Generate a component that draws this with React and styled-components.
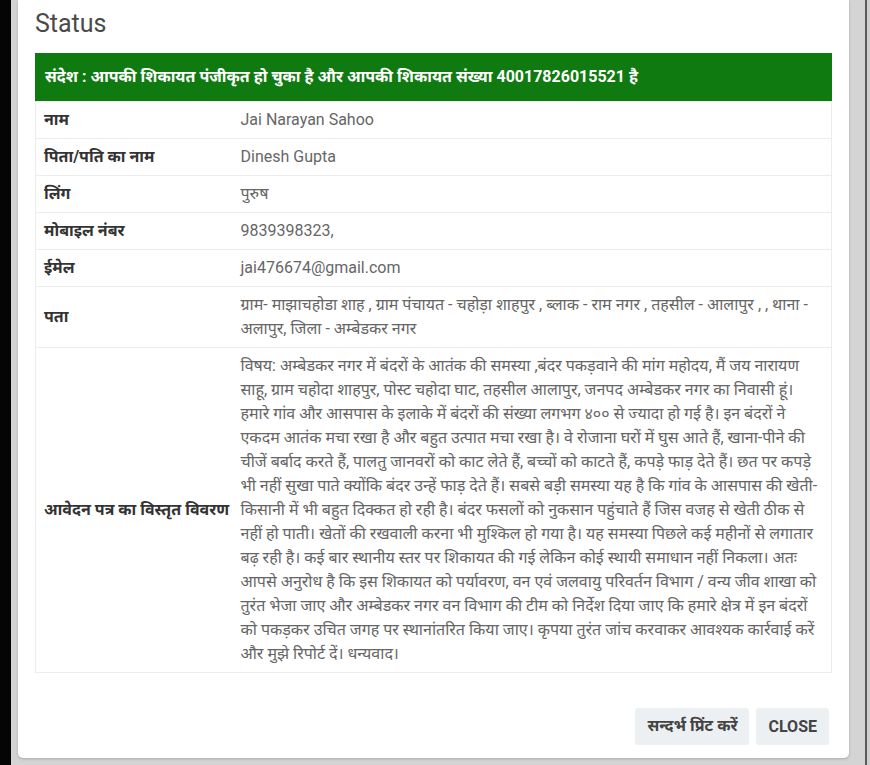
import React from "react";
import styled, { createGlobalStyle } from "styled-components";

const FONT = `Roboto, "Noto Sans Devanagari", "Noto Sans", "Lohit Devanagari", sans-serif`;

const rows = [
  { label: "नाम", value: ["Jai Narayan Sahoo"] },
  { label: "पिता/पति का नाम", value: ["Dinesh Gupta"] },
  { label: "लिंग", value: ["पुरुष"] },
  { label: "मोबाइल नंबर", value: ["9839398323,"] },
  { label: "ईमेल", value: ["jai476674@gmail.com"] },
  {
    label: "पता",
    value: [
      "ग्राम- माझाचहोडा शाह , ग्राम पंचायत - चहोड़ा शाहपुर , ब्लाक - राम नगर , तहसील - आलापुर , , थाना -",
      "अलापुर, जिला - अम्बेडकर नगर",
    ],
  },
  {
    label: "आवेदन पत्र का विस्तृत विवरण",
    value: [
      "विषय: अम्बेडकर नगर में बंदरों के आतंक की समस्या ,बंदर पकड़वाने की मांग महोदय, मैं जय नारायण",
      "साहू, ग्राम चहोदा शाहपुर, पोस्ट चहोदा घाट, तहसील आलापुर, जनपद अम्बेडकर नगर का निवासी हूं।",
      "हमारे गांव और आसपास के इलाके में बंदरों की संख्या लगभग ४०० से ज्यादा हो गई है। इन बंदरों ने",
      "एकदम आतंक मचा रखा है और बहुत उत्पात मचा रखा है। वे रोजाना घरों में घुस आते हैं, खाना-पीने की",
      "चीजें बर्बाद करते हैं, पालतु जानवरों को काट लेते हैं, बच्चों को काटते हैं, कपड़े फाड़ देते हैं। छत पर कपड़े",
      "भी नहीं सुखा पाते क्योंकि बंदर उन्हें फाड़ देते हैं। सबसे बड़ी समस्या यह है कि गांव के आसपास की खेती-",
      "किसानी में भी बहुत दिक्कत हो रही है। बंदर फसलों को नुकसान पहुंचाते हैं जिस वजह से खेती ठीक से",
      "नहीं हो पाती। खेतों की रखवाली करना भी मुश्किल हो गया है। यह समस्या पिछले कई महीनों से लगातार",
      "बढ़ रही है। कई बार स्थानीय स्तर पर शिकायत की गई लेकिन कोई स्थायी समाधान नहीं निकला। अतः",
      "आपसे अनुरोध है कि इस शिकायत को पर्यावरण, वन एवं जलवायु परिवर्तन विभाग / वन्य जीव शाखा को",
      "तुरंत भेजा जाए और अम्बेडकर नगर वन विभाग की टीम को निर्देश दिया जाए कि हमारे क्षेत्र में इन बंदरों",
      "को पकड़कर उचित जगह पर स्थानांतरित किया जाए। कृपया तुरंत जांच करवाकर आवश्यक कार्रवाई करें",
      "और मुझे रिपोर्ट दें। धन्यवाद।",
    ],
  },
];

const GlobalStyle = createGlobalStyle`
  html, body {
    margin: 0;
    padding: 0;
    height: 765px;
    overflow: hidden;
  }
  body {
    font-family: ${FONT};
    background: linear-gradient(
      to right,
      #050505 0, #050505 11px,
      #d4d4d4 11px, #d4d4d4 865px,
      #5a5a5a 865px, #5a5a5a 867px,
      #cfcfcf 867px
    );
  }
`;

const Backdrop = styled.div`
  display: flex;
  height: 765px;
  padding-left: 18px;
  box-sizing: border-box;
`;

const Modal = styled.div`
  width: 831px;
  height: 758px;
  background: #fff;
  border-radius: 0 0 5px 5px;
  box-shadow: 0 1px 3px rgba(0, 0, 0, 0.2);
  display: flex;
  flex-direction: column;
  box-sizing: border-box;
  padding: 9px 17px 0 17px;
`;

const Title = styled.h4`
  margin: 0;
  font-size: 25px;
  line-height: 30px;
  font-weight: 400;
  color: #4a4a4a;
`;

const Banner = styled.div`
  margin-top: 14px;
  height: 48px;
  line-height: 48px;
  background: #0f7a0f;
  color: #fff;
  font-weight: 700;
  font-size: 16px;
  padding: 0 10px;
  white-space: nowrap;
`;

const Table = styled.table`
  width: 100%;
  table-layout: fixed;
  border-collapse: collapse;
  border: 1px solid #ececec;
  border-top: none;
  font-size: 16px;
`;

const Row = styled.tr`
  border-top: 1px solid #ececec;
`;

const Label = styled.td`
  width: 197px;
  box-sizing: border-box;
  padding: 6px 8px;
  line-height: 24px;
  font-weight: 700;
  color: #333;
  vertical-align: middle;
  white-space: nowrap;
`;

const Value = styled.td`
  padding: 6px 8px;
  line-height: 24px;
  color: #666;
  vertical-align: top;
`;

const Line = styled.div`
  white-space: nowrap;
`;

const Footer = styled.div`
  display: flex;
  justify-content: flex-end;
  gap: 7px;
  margin-top: 35px;
  padding-right: 3px;
`;

const Button = styled.button`
  height: 37px;
  padding: 0 12px;
  border: none;
  border-radius: 3px;
  background: #edf0f2;
  color: #444;
  font-family: ${FONT};
  font-size: 16px;
  font-weight: 700;
  text-transform: ${({ $upper }) => ($upper ? "uppercase" : "none")};
  cursor: pointer;
`;

const App = () => {
  return (
    <>
      <GlobalStyle />
      <Backdrop>
        <Modal>
          <Title>Status</Title>
          <Banner>
            संदेश : आपकी शिकायत पंजीकृत हो चुका है और आपकी शिकायत संख्या 40017826015521 है
          </Banner>
          <Table>
            <tbody>
              {rows.map((row) => (
                <Row key={row.label}>
                  <Label>{row.label}</Label>
                  <Value>
                    {row.value.map((line) => (
                      <Line key={line}>{line}</Line>
                    ))}
                  </Value>
                </Row>
              ))}
            </tbody>
          </Table>
          <Footer>
            <Button>सन्दर्भ प्रिंट करें</Button>
            <Button $upper>Close</Button>
          </Footer>
        </Modal>
      </Backdrop>
    </>
  );
};

export default App;
